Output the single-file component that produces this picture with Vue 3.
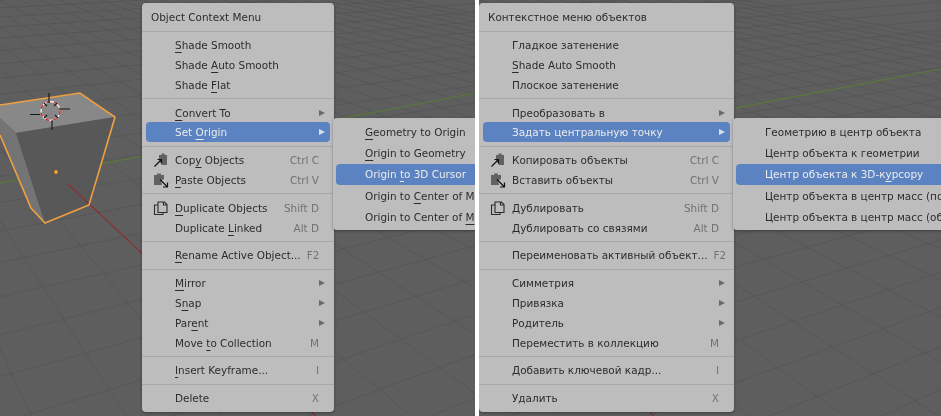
<script setup>
const gridLines = []
// floor grid: two fans that meet far away, fitted to the reference
for (let n = -24; n < 8; n++) {
  const y0 = -83 + 418 * Math.pow(1.1, n)
  const slope = 0.05 + 0.0006 * y0
  gridLines.push({ x1: -10, y1: y0 + 10 * slope, x2: 640, y2: y0 - 640 * slope })
}
for (let k = -8; k < 26; k++) {
  const x400 = 300 + 92 * k
  const d = 0.42 + 0.00195 * x400
  gridLines.push({ x1: x400 - 440 * d, y1: -40, x2: x400 + 20 * d, y2: 420 })
}

const panels = [
  {
    side: 'left',
    shift: 0,
    title: 'Object Context Menu',
    groups: [
      [
        { text: 'Shade Smooth', key: 0 },
        { text: 'Shade Auto Smooth', key: 6 },
        { text: 'Shade Flat', key: 6 },
      ],
      [
        { text: 'Convert To', key: 0, sub: true },
        { text: 'Set Origin', key: 4, sub: true, active: true },
      ],
      [
        { text: 'Copy Objects', key: 3, hint: 'Ctrl C', icon: 'copy' },
        { text: 'Paste Objects', key: 0, hint: 'Ctrl V', icon: 'paste' },
      ],
      [
        { text: 'Duplicate Objects', key: 0, hint: 'Shift D', icon: 'dup' },
        { text: 'Duplicate Linked', key: 10, hint: 'Alt D' },
      ],
      [{ text: 'Rename Active Object...', key: 0, hint: 'F2' }],
      [
        { text: 'Mirror', key: 0, sub: true },
        { text: 'Snap', key: 1, sub: true },
        { text: 'Parent', key: 3, sub: true },
        { text: 'Move to Collection', key: 5, hint: 'M' },
      ],
      [{ text: 'Insert Keyframe...', key: 0, hint: 'I' }],
      [{ text: 'Delete', hint: 'X' }],
    ],
    submenu: [
      { text: 'Geometry to Origin', key: 0 },
      { text: 'Origin to Geometry', key: 0 },
      { text: 'Origin to 3D Cursor', key: 7, active: true },
      { text: 'Origin to Center of Mass (Surface)', key: 10 },
      { text: 'Origin to Center of Mass (Volume)', key: 20 },
    ],
  },
  {
    side: 'right',
    shift: -141,
    title: 'Контекстное меню объектов',
    groups: [
      [
        { text: 'Гладкое затенение' },
        { text: 'Shade Auto Smooth', key: 0 },
        { text: 'Плоское затенение' },
      ],
      [
        { text: 'Преобразовать в', sub: true },
        { text: 'Задать центральную точку', sub: true, active: true },
      ],
      [
        { text: 'Копировать объекты', hint: 'Ctrl C', icon: 'copy' },
        { text: 'Вставить объекты', hint: 'Ctrl V', icon: 'paste' },
      ],
      [
        { text: 'Дублировать', hint: 'Shift D', icon: 'dup' },
        { text: 'Дублировать со связями', hint: 'Alt D' },
      ],
      [{ text: 'Переименовать активный объект...', hint: 'F2' }],
      [
        { text: 'Симметрия', sub: true },
        { text: 'Привязка', sub: true },
        { text: 'Родитель', sub: true },
        { text: 'Переместить в коллекцию', hint: 'M' },
      ],
      [{ text: 'Добавить ключевой кадр...', hint: 'I' }],
      [{ text: 'Удалить', hint: 'X' }],
    ],
    submenu: [
      { text: 'Геометрию в центр объекта' },
      { text: 'Центр объекта к геометрии' },
      { text: 'Центр объекта к 3D-курсору', key: 20, active: true },
      { text: 'Центр объекта в центр масс (поверхность)' },
      { text: 'Центр объекта в центр масс (объём)' },
    ],
  },
]

const before = (item) => (item.key === undefined ? item.text : item.text.slice(0, item.key))
const mark = (item) => (item.key === undefined ? '' : item.text[item.key])
const after = (item) => (item.key === undefined ? '' : item.text.slice(item.key + 1))
</script>

<template>
  <div class="page">
    <section v-for="panel in panels" :key="panel.side" class="viewport" :class="panel.side">
      <svg class="scene" viewBox="0 0 480 416" width="480" height="416">
        <g :transform="`translate(${panel.shift} 0)`">
          <line
            v-for="(l, i) in gridLines"
            :key="i"
            :x1="l.x1"
            :y1="l.y1"
            :x2="l.x2"
            :y2="l.y2"
            stroke="#565656"
            stroke-width="0.9"
          />
          <line x1="-20" y1="187" x2="640" y2="62" stroke="#587a38" stroke-width="1.2" />
          <line x1="68" y1="184" x2="320" y2="420" stroke="#8a3036" stroke-width="1.2" />
          <polygon points="0,105 80,93 115,117 16,133 0,118" fill="#888888" />
          <polygon points="0,118 16,133 45,223 31,208 0,135" fill="#747474" />
          <polygon points="16,133 115,117 89,205 45,223" fill="#585858" />
          <line x1="68" y1="184" x2="89" y2="204" stroke="#8a3036" stroke-width="1.2" />
          <polyline points="0,105 80,93 115,117 89,205 45,223 31,208 0,135" fill="none" stroke="#f0a040" stroke-width="1.6" />
          <circle cx="56" cy="172" r="2.4" fill="#f0a040" stroke="#3c3020" stroke-width=".6" />
          <circle cx="50.5" cy="111" r="9.5" fill="none" stroke="#f4f4f4" stroke-width="1.3" />
          <circle cx="50.5" cy="111" r="9.5" fill="none" stroke="#d82020" stroke-width="1.3" stroke-dasharray="4 4" />
          <path
            d="M49 93v10M52 120v10M30 114.500h10M60 109h10M44 103l3 3M57 103l-3 3M44 118l3-3M58 118l-3-3"
            stroke="#161616"
            stroke-width="1.1"
            fill="none"
          />
        </g>
      </svg>

      <div class="menu main-menu">
        <div class="title">{{ panel.title }}</div>
        <template v-for="(group, g) in panel.groups" :key="g">
          <div class="sep"></div>
          <div
            v-for="item in group"
            :key="item.text"
            class="row"
            :class="{ active: item.active }"
          >
            <span class="icon">
              <svg v-if="item.icon === 'copy'" viewBox="0 0 16 16" width="16" height="16">
                <path d="M6 3h2.500V1.500h3V3H14v10H9L6 8z" fill="#626262" />
                <path d="M1.500 14.500L8 8M4.500 7.500h4v4" fill="none" stroke="#111" stroke-width="1.200" />
              </svg>
              <svg v-else-if="item.icon === 'paste'" viewBox="0 0 16 16" width="16" height="16">
                <path d="M1 3h3V1.500h4V3h3v4l-3 1.500 1 4.500H1z" fill="#626262" />
                <path d="M7 7.500l7 7M14.500 10.500v4.500H10" fill="none" stroke="#111" stroke-width="1.200" />
              </svg>
              <svg v-else-if="item.icon === 'dup'" viewBox="0 0 16 16" width="16" height="16">
                <path d="M5 12.500V2h6.500L14 4.500v8z" fill="none" stroke="#2c2c2c" stroke-width="1.100" />
                <path d="M5 5H1.500v9.500H10v-2M10.500 2v3H14" fill="none" stroke="#2c2c2c" stroke-width="1.100" />
              </svg>
            </span>
            <span class="label">{{ before(item) }}<u>{{ mark(item) }}</u>{{ after(item) }}</span>
            <span v-if="item.hint" class="hint">{{ item.hint }}</span>
            <span v-if="item.sub" class="arrow"></span>
          </div>
        </template>
      </div>

      <div class="menu sub-menu">
        <div
          v-for="item in panel.submenu"
          :key="item.text"
          class="row"
          :class="{ active: item.active }"
        >
          <span class="label">{{ before(item) }}<u>{{ mark(item) }}</u>{{ after(item) }}</span>
        </div>
      </div>
    </section>
  </div>
</template>

<style scoped>
.page {
  width: 941px;
  height: 416px;
  display: flex;
  gap: 4px;
  background: #fff;
  font-family: "DejaVu Sans", sans-serif;
  font-size: 10.450px;
  color: #2c2c2c;
  overflow: hidden;
}
.viewport {
  position: relative;
  height: 416px;
  background: #5e5e5e;
  overflow: hidden;
}
.viewport.left { width: 475px; }
.viewport.right { width: 462px; }
.scene { position: absolute; left: 0; top: 0; }

.menu {
  position: absolute;
  background: #bdbdbd;
  border-radius: 4px;
  box-shadow: 0 1px 3px rgba(0, 0, 0, 0.35);
  filter: blur(0.35px);
}
.main-menu {
  top: 3px;
  padding: 4.500px 4px;
  box-sizing: border-box;
  height: 409px;
}
.left .main-menu { left: 142px; width: 192px; }
.right .main-menu { left: 0; width: 255px; }
.sub-menu {
  top: 118px;
  height: 112px;
  padding: 3px 0 3px 3px;
  box-sizing: border-box;
  width: 240px;
}
.left .sub-menu { left: 333px; }
.right .sub-menu { left: 254px; }
.sub-menu .row {
  height: 21.300px;
  padding-left: 29px;
  white-space: nowrap;
}

.title {
  height: 19.800px;
  line-height: 18px;
  padding-left: 5px;
}
.sep {
  height: 8px;
  display: flex;
  align-items: center;
  margin: 0 -4px;
}
.sep::before {
  content: "";
  flex: 1;
  height: 1px;
  background: #a9a9a9;
}
.row {
  height: 19.800px;
  display: flex;
  align-items: center;
  border-radius: 4px;
  padding: 0 5px 0 7px;
}
.row.active {
  background: #5b82c1;
  color: #ececec;
}
.icon {
  width: 22px;
  flex: none;
  display: flex;
  align-items: center;
}
.label {
  flex: 1;
  white-space: nowrap;
}
.label u {
  text-decoration-thickness: 1px;
  text-underline-offset: 3px;
  text-decoration-skip-ink: none;
}
.hint {
  color: #727272;
  margin-right: 6px;
  margin-left: 6px;
}
.arrow {
  width: 0;
  height: 0;
  border-left: 6px solid #6a6a6a;
  border-top: 3.500px solid transparent;
  border-bottom: 3.500px solid transparent;
}
.active .arrow { border-left-color: #d8e0ee; }
</style>
